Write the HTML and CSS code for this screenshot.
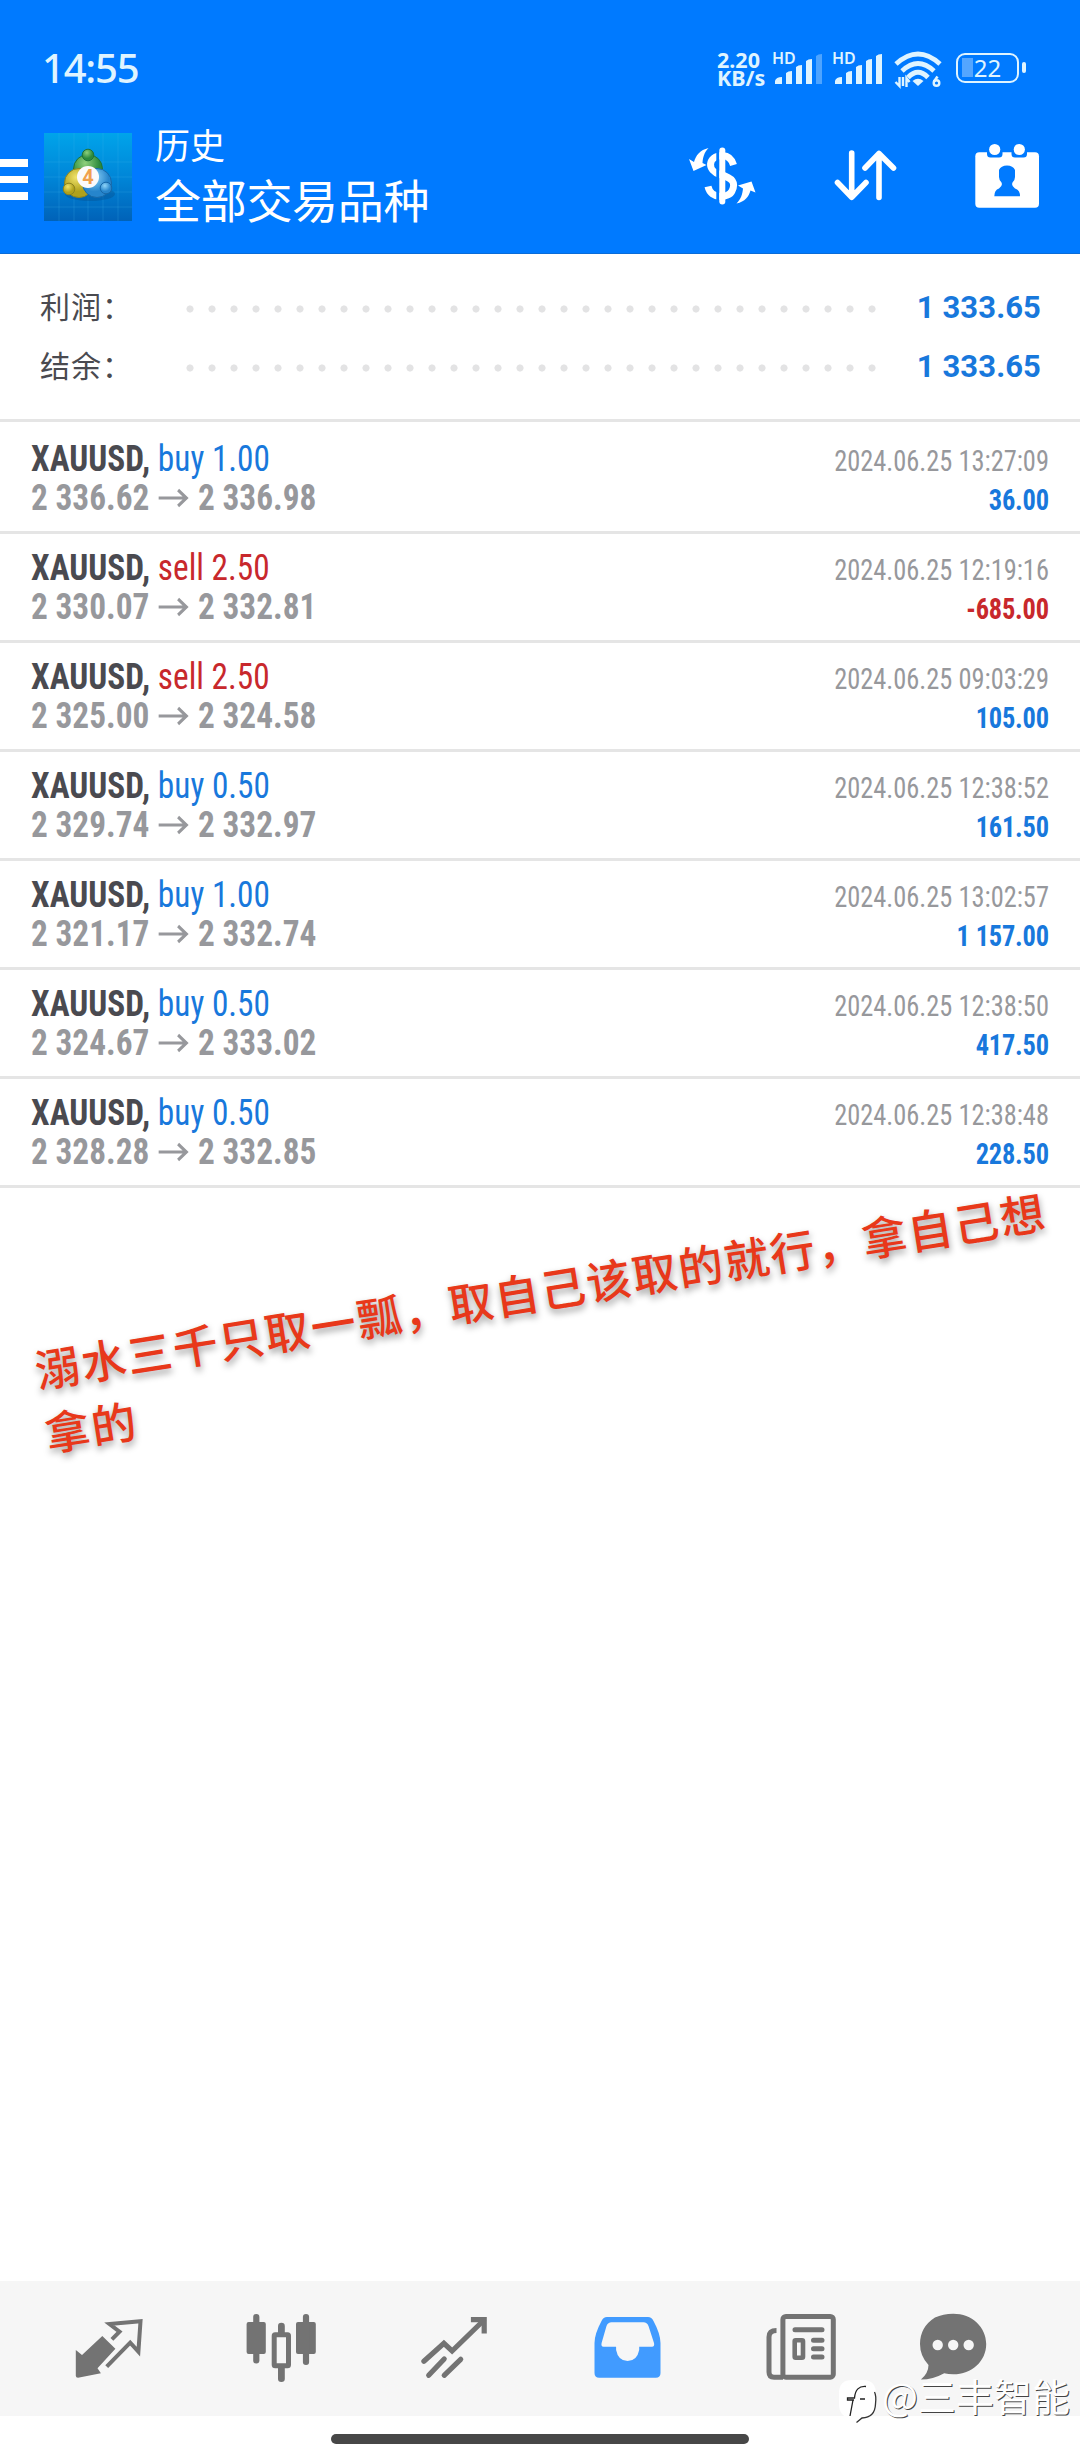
FILE: index.html
```html
<!DOCTYPE html>
<html lang="zh-CN">
<head>
    <meta charset="UTF-8">
    <meta name="viewport" content="width=device-width, initial-scale=1.0">
    <title>历史</title>
    <link rel="stylesheet" href="styles.css">
</head>
<body>
    <div class="screen">
        <header class="header">
            <div class="status-bar">
                <span class="clock">14:55</span>
                <div class="status-icons">
                    <div class="net-speed"><span>2.20</span><span>KB/s</span></div>
                    <div class="signal">
                        <span class="hd">HD</span>
                        <svg width="50" height="32" viewBox="0 0 50 32" fill="#dff4ff">
                            <path d="M1 31v-3q1-4 7-4v7zM12 31V20q2-2 6-2v13zM22 31V14q2-2 6-2v19zM32 31V8q2-2 6-2v25z"/>
                            <path d="M42 31V3q2-2 6-2v30z" opacity=".35"/>
                        </svg>
                    </div>
                    <div class="signal">
                        <span class="hd">HD</span>
                        <svg width="50" height="32" viewBox="0 0 50 32" fill="#dff4ff">
                            <path d="M1 31v-3q1-4 7-4v7zM12 31V20q2-2 6-2v13zM22 31V14q2-2 6-2v19zM32 31V8q2-2 6-2v25zM42 31V3q2-2 6-2v30z"/>
                        </svg>
                    </div>
                    <svg class="wifi" width="48" height="38" viewBox="0 0 48 38" fill="none" stroke="#dff4ff" stroke-width="4.8">
                        <path d="M2 13Q24-7 46 13M8 20Q24 5 40 20M14 26.500Q24 16 34 26.500"/>
                        <path d="M18.500 30Q24 25.500 29.500 30L24 35z" fill="#dff4ff" stroke="none"/>
                        <path d="M5.500 26v9L1.500 31M9 26v9M12.500 36v-9l3 4" stroke-width="2.400"/>
                        <path d="M43.500 25.500L40 30.500" stroke-width="2.600"/>
                        <circle cx="42.500" cy="32" r="2.800" stroke-width="2.400"/>
                    </svg>
                    <div class="battery"><span>22</span></div>
                </div>
            </div>
            <div class="app-bar">
                <div class="menu"><i></i><i></i><i></i></div>
                <svg class="logo" width="88" height="88" viewBox="0 0 88 88">
                    <defs>
                        <linearGradient id="sky" x1="0" y1="0" x2="0" y2="1">
                            <stop offset="0" stop-color="#00a4ea"/>
                            <stop offset=".5" stop-color="#0086d8"/>
                            <stop offset="1" stop-color="#0062b8"/>
                        </linearGradient>
                        <radialGradient id="green" cx=".4" cy=".3">
                            <stop offset="0" stop-color="#8ed07c"/>
                            <stop offset="1" stop-color="#2c8a3c"/>
                        </radialGradient>
                        <radialGradient id="yellow" cx=".4" cy=".3">
                            <stop offset="0" stop-color="#f0e36a"/>
                            <stop offset="1" stop-color="#b0a11c"/>
                        </radialGradient>
                        <radialGradient id="blue" cx=".4" cy=".3">
                            <stop offset="0" stop-color="#8fd4f8"/>
                            <stop offset="1" stop-color="#2685cc"/>
                        </radialGradient>
                    </defs>
                    <rect width="88" height="88" fill="url(#sky)"/>
                    <path d="M15 0V88M30 0V88M44 0V88M59 0V88M74 0V88M0 29H88M0 44H88M0 59H88M0 74H88" stroke="#3fb4ee" stroke-opacity=".22"/>
                    <ellipse cx="46" cy="61" rx="25" ry="7" fill="#064a86" opacity=".35"/>
                    <circle cx="44" cy="36" r="14.500" fill="url(#green)" stroke="#1f7238"/>
                    <circle cx="35" cy="50" r="14.500" fill="url(#yellow)" stroke="#8c8420"/>
                    <circle cx="53" cy="50" r="14.500" fill="url(#blue)" stroke="#1868a8"/>
                    <circle cx="44" cy="22" r="5.800" fill="url(#green)" stroke="#1f7238"/>
                    <circle cx="25" cy="56" r="5.800" fill="url(#yellow)" stroke="#8c8420"/>
                    <circle cx="62" cy="55" r="5.800" fill="url(#blue)" stroke="#1868a8"/>
                    <circle cx="44" cy="44" r="11" fill="#fbfafa"/>
                    <text x="44" y="51" class="logo-num" text-anchor="middle">4</text>
                </svg>
                <div class="titles">
                    <p class="title">历史</p>
                    <p class="subtitle">全部交易品种</p>
                </div>
                <div class="actions">
                    <svg width="76" height="64" viewBox="0 0 76 64">
                        <path d="M48.500 21Q46 12 37.500 11.500C22 12 22 27 35 30.500S51 39 47 47C44 54 26 56 23 42.500" fill="none" stroke="#fff" stroke-width="7"/>
                        <path d="M32.800 4v56" stroke="#007aff" stroke-width="3"/>
                        <path d="M37.300 6.500v51" stroke="#fff" stroke-width="6" stroke-linecap="round"/>
                        <path d="M4 15l5 3C11 11 15 6 23.500 4 19 9 18 13 17.500 19l4 2L8.500 27zM70.500 48.500l-4-11L53 41.500l5 3C57.500 50 56 55 51.500 59.500 60 58 64 52 65.500 46.500z" fill="#fff"/>
                    </svg>
                    <svg width="72" height="60" viewBox="0 0 72 60" fill="none" stroke="#fff" stroke-width="5.600" stroke-linecap="round" stroke-linejoin="round">
                        <path d="M21.700 7v44M7.500 36.500l14.200 14.700L36 36.500"/>
                        <path d="M49 51.500V7.500M35 22L49 7.500 63.500 22"/>
                    </svg>
                    <svg width="74" height="72" viewBox="0 0 74 72">
                        <rect x="5.300" y="12.300" width="63.700" height="55.400" rx="4" fill="#fff"/>
                        <path d="M17 10h15.500v4q0 3.500-3.500 3.500h-8.500q-3.500 0-3.500-3.500zM41.500 10H57v4q0 3.500-3.500 3.500H45q-3.500 0-3.500-3.500z" fill="#007aff"/>
                        <circle cx="24.700" cy="9.500" r="5.600" fill="#fff"/>
                        <circle cx="49.300" cy="9.500" r="5.600" fill="#fff"/>
                        <path d="M29 30Q31 25.500 37 25.500T45 30V37q0 3-2.500 5.500Q41 46 45 48.500 50 50 50 56.300H24.300Q24.300 50 29 48.500 33 46 31.500 42.500 29 40 29 37z" fill="#007aff"/>
                    </svg>
                </div>
            </div>
        </header>

        <section class="summary">
            <div class="summary-row"><span class="label">利润：</span><span class="dots"></span><b>1 333.65</b></div>
            <div class="summary-row"><span class="label">结余：</span><span class="dots"></span><b>1 333.65</b></div>
        </section>

        <main class="deals">
            <div class="deal">
                <div class="left">
                    <p><b>XAUUSD,</b> <span class="buy">buy 1.00</span></p>
                    <p class="price">2 336.62 <svg class="arrow" viewBox="0 0 34 20"><path d="M1 10h30M22 2l9 8-9 8"/></svg> 2 336.98</p>
                </div>
                <div class="right"><p class="date">2024.06.25 13:27:09</p><p class="profit">36.00</p></div>
            </div>
            <div class="deal">
                <div class="left">
                    <p><b>XAUUSD,</b> <span class="sell">sell 2.50</span></p>
                    <p class="price">2 330.07 <svg class="arrow" viewBox="0 0 34 20"><path d="M1 10h30M22 2l9 8-9 8"/></svg> 2 332.81</p>
                </div>
                <div class="right"><p class="date">2024.06.25 12:19:16</p><p class="profit loss">-685.00</p></div>
            </div>
            <div class="deal">
                <div class="left">
                    <p><b>XAUUSD,</b> <span class="sell">sell 2.50</span></p>
                    <p class="price">2 325.00 <svg class="arrow" viewBox="0 0 34 20"><path d="M1 10h30M22 2l9 8-9 8"/></svg> 2 324.58</p>
                </div>
                <div class="right"><p class="date">2024.06.25 09:03:29</p><p class="profit">105.00</p></div>
            </div>
            <div class="deal">
                <div class="left">
                    <p><b>XAUUSD,</b> <span class="buy">buy 0.50</span></p>
                    <p class="price">2 329.74 <svg class="arrow" viewBox="0 0 34 20"><path d="M1 10h30M22 2l9 8-9 8"/></svg> 2 332.97</p>
                </div>
                <div class="right"><p class="date">2024.06.25 12:38:52</p><p class="profit">161.50</p></div>
            </div>
            <div class="deal">
                <div class="left">
                    <p><b>XAUUSD,</b> <span class="buy">buy 1.00</span></p>
                    <p class="price">2 321.17 <svg class="arrow" viewBox="0 0 34 20"><path d="M1 10h30M22 2l9 8-9 8"/></svg> 2 332.74</p>
                </div>
                <div class="right"><p class="date">2024.06.25 13:02:57</p><p class="profit">1 157.00</p></div>
            </div>
            <div class="deal">
                <div class="left">
                    <p><b>XAUUSD,</b> <span class="buy">buy 0.50</span></p>
                    <p class="price">2 324.67 <svg class="arrow" viewBox="0 0 34 20"><path d="M1 10h30M22 2l9 8-9 8"/></svg> 2 333.02</p>
                </div>
                <div class="right"><p class="date">2024.06.25 12:38:50</p><p class="profit">417.50</p></div>
            </div>
            <div class="deal">
                <div class="left">
                    <p><b>XAUUSD,</b> <span class="buy">buy 0.50</span></p>
                    <p class="price">2 328.28 <svg class="arrow" viewBox="0 0 34 20"><path d="M1 10h30M22 2l9 8-9 8"/></svg> 2 332.85</p>
                </div>
                <div class="right"><p class="date">2024.06.25 12:38:48</p><p class="profit">228.50</p></div>
            </div>
            <p class="note">溺水三千只取一瓢，取自己该取的就行，拿自己想<br>拿的</p>
        </main>

        <nav class="tab-bar">
            <svg width="80" height="76" viewBox="0 0 80 76">
                <path d="M5.800 40l6.200 5 20.300-19 13.100 12.700-17.900 19.600 3.400 5L8 67.700q-2.200 0-2.200-2z" fill="#737373"/>
                <path d="M41.900 29.300l7.600-7.600-10-7.700 31-2.700-2.100 30.400-8.200-9-23.500 24" fill="none" stroke="#737373" stroke-width="4"/>
            </svg>
            <svg width="80" height="76" viewBox="0 0 80 76" fill="#737373">
                <rect x="6.600" y="12" width="19.200" height="32" rx="2"/>
                <rect x="13.200" y="4" width="6.200" height="49.500" rx="3"/>
                <rect x="34.200" y="24.800" width="14.300" height="31" rx="1" fill="none" stroke="#737373" stroke-width="5"/>
                <path d="M38 24v-8q0-3.300 3.400-3.300t3.400 3.300v8zM38 57v12q0 3 3.400 3t3.400-3V57z"/>
                <rect x="56" y="12" width="19.800" height="32" rx="2"/>
                <rect x="62.900" y="4" width="6.200" height="51" rx="3"/>
            </svg>
            <svg width="80" height="76" viewBox="0 0 80 76" fill="none" stroke="#737373" stroke-width="5.200" stroke-linecap="round">
                <path d="M8.900 51.300l20-18 8.200 7.700L68.500 10.500"/>
                <path d="M58.500 9.700h10.700V21" stroke-linecap="square"/>
                <path d="M29.200 49L13.700 65.300M45.700 49.300L29.200 65.300"/>
            </svg>
            <svg width="80" height="76" viewBox="0 0 80 76">
                <path d="M4.500 63V33Q4.500 24 11.500 11 13.300 7 17 7H58q3.700 0 5.500 4 7 13 7 22V63q0 4.700-4.700 4.700H9.200q-4.700 0-4.700-4.700z" fill="#419bff"/>
                <path d="M21.500 12.300H53.500q3.500 0 5 3.700L64 33q.8 3.700-2 3.700H49.200V40Q47 51 37.600 51T26.100 40V36.700H13.500Q10.800 36.700 11.600 33L16.500 16q1.500-3.700 5-3.700z" fill="#f6f6f6"/>
            </svg>
            <svg width="80" height="76" viewBox="0 0 80 76" fill="none" stroke="#737373" stroke-width="5" stroke-linecap="round">
                <rect x="22.900" y="6.500" width="50.400" height="60.700" rx="3"/>
                <path d="M16.500 20.500q-7.500 0-7.500 6.500V62q0 5.200 5 5.200h9" stroke-linecap="butt"/>
                <path d="M35 19.700H62M53.500 30.300H62M53.500 38.700H62M53.500 47H62"/>
                <rect x="34.700" y="30.200" width="8.300" height="17.500" rx="1" stroke-width="4.600"/>
            </svg>
            <svg width="80" height="76" viewBox="0 0 80 76">
                <path d="M38.200 3.700C57 3.700 71.200 17 71.200 34S57 64.300 38.200 64.300q-5 0-9-1Q18 69.600 5.900 69.600 13.500 63 13.500 55 5 46 5 34 5 17 20 7.500 28 3.700 38.200 3.700z" fill="#737373"/>
                <g fill="#f6f6f6"><circle cx="22.700" cy="35" r="5.200"/><circle cx="38.200" cy="35" r="5.200"/><circle cx="53.700" cy="35" r="5.200"/></g>
            </svg>
        </nav>
        <div class="home-area"><div class="home-bar"></div></div>

        <div class="watermark">
            <svg width="40" height="46" viewBox="0 0 40 46">
                <path d="M14 1H25Q38 1 38 15V25Q38 39 24 39L18 44 19 39H13Q1 38 1 25V14Q1 1 14 1z" fill="#fff"/>
                <path d="M36.500 13Q38.500 17 37.500 25 37 38.500 24 39L18.500 43.500" fill="none" stroke="#333" stroke-width="1.300"/>
                <path d="M28 7.500Q17.500 6.500 16.500 19H9.500V21H16M12 37l3-16M22 20h5" fill="none" stroke="#222" stroke-width="1.300"/>
            </svg>
            <span>@三丰智能</span>
        </div>
    </div>
</body>
</html>
```
FILE: styles.css
```css
body, html {
    margin: 0;
    padding: 0;
    background-color: #ffffff;
    font-family: Roboto, "Noto Sans CJK SC", sans-serif;
}
p {
    margin: 0;
}
svg {
    display: block;
    flex-shrink: 0;
}
.screen {
    position: relative;
    display: flex;
    flex-direction: column;
    width: 1080px;
    height: 2460px;
    overflow: hidden;
}

/* header */
.header {
    height: 254px;
    box-sizing: border-box;
    background-color: #007aff;
    border-bottom: 1px solid #0a6cd8;
    color: #ffffff;
}
.status-bar {
    display: flex;
    justify-content: space-between;
    height: 114px;
    padding: 0 61px 0 42px;
    color: #dff4ff;
    font-family: "Noto Sans", "Noto Sans CJK SC", sans-serif;
}
.clock {
    margin-top: 40px;
    font-size: 40px;
    line-height: 56px;
    font-weight: 500;
    letter-spacing: -1.2px;
}
.status-icons {
    display: flex;
    align-items: flex-start;
    padding-top: 51px;
}
.net-speed {
    display: flex;
    flex-direction: column;
    width: 55px;
    font-size: 21.5px;
    line-height: 18px;
    font-weight: 700;
}
.signal {
    position: relative;
    width: 60px;
    padding-top: 2px;
}
.signal svg {
    margin-left: 2px;
}
.hd {
    position: absolute;
    left: 0;
    top: -1px;
    font-size: 16px;
    line-height: 16px;
    font-weight: 600;
}
.wifi {
    margin: 0 14px 0 2px;
}
.battery {
    position: relative;
    width: 63px;
    height: 30px;
    box-sizing: border-box;
    margin-top: 2px;
    border: 2.5px solid #dff4ff;
    border-radius: 9px;
    background: linear-gradient(#54a6ff, #54a6ff) 4px 3px / 11px 19px no-repeat;
    font-size: 24px;
    line-height: 25px;
    text-align: center;
}
.battery::after {
    content: "";
    position: absolute;
    right: -9px;
    top: 7px;
    width: 4px;
    height: 11px;
    border-radius: 2px;
    background-color: #dff4ff;
}
.app-bar {
    display: flex;
    align-items: flex-start;
}
.menu {
    display: flex;
    flex-direction: column;
    gap: 9px;
    width: 44px;
    padding-top: 45px;
}
.menu i {
    width: 28px;
    height: 7.5px;
    background-color: #ffffff;
}
.logo {
    margin-top: 19px;
}
.logo-num {
    font-size: 20px;
    font-weight: 700;
    fill: #f0a04c;
}
.titles {
    width: 530px;
    padding: 5px 0 0 23px;
    font-family: "Noto Sans CJK SC", sans-serif;
}
.title {
    font-size: 35px;
    line-height: 49px;
}
.subtitle {
    font-size: 46px;
    line-height: 60px;
    letter-spacing: -0.3px;
}
.actions {
    display: flex;
    align-items: center;
    gap: 68.5px;
    padding-top: 26px;
}

/* totals */
.summary {
    height: 165px;
    box-sizing: border-box;
    padding: 23px 39px 0 40px;
}
.summary-row {
    display: flex;
    align-items: center;
    height: 59px;
    color: #4a4a50;
}
.label {
    width: 146px;
    margin-top: -4px;
    font-family: "Noto Sans CJK SC", sans-serif;
    font-size: 30px;
    letter-spacing: 1px;
}
.dots {
    flex-shrink: 0;
    width: 704px;
    height: 8px;
    margin: 5px 0 0 -7.5px;
    background: radial-gradient(circle, #e3e3e4 3.2px, transparent 3.9px) 0 0 / 22px 8px repeat-x;
}
.summary-row b {
    margin: 2px 0 0 auto;
    color: #1878dc;
    font-size: 31px;
    letter-spacing: 0.1px;
}

/* deals */
.deals {
    flex: 1;
    border-top: 3px solid #e5e5e5;
}
.deal {
    display: flex;
    justify-content: space-between;
    height: 109px;
    box-sizing: border-box;
    padding: 14px 31px 0;
    border-bottom: 3px solid #e5e5e5;
    font-stretch: 75%;
}
.deal:first-child {
    height: 112px;
    padding-top: 17px;
}
.left {
    color: #4a4a50;
    font-size: 36px;
    line-height: 40px;
    white-space: nowrap;
    transform: scaleX(0.925);
    transform-origin: 0 0;
}
.price {
    margin-top: -1px;
    color: #97989c;
    font-weight: 700;
}
.arrow {
    display: inline-block;
    width: 36px;
    height: 20px;
    vertical-align: 2px;
    fill: none;
    stroke: #97989c;
    stroke-width: 3.2;
}
.right {
    padding-top: 3px;
    font-size: 29px;
    line-height: 39px;
    text-align: right;
    transform: scaleX(0.91);
    transform-origin: 100% 0;
}
.date {
    color: #97989c;
}
.buy {
    color: #1878dc;
}
.sell {
    color: #c8282c;
}
.profit {
    color: #1878dc;
    font-weight: 700;
    letter-spacing: -0.2px;
}
.profit.loss {
    color: #c8282c;
}
.note {
    position: absolute;
    left: 30px;
    top: 1338px;
    transform: rotate(-9deg);
    transform-origin: 0 0;
    color: #e8381a;
    font-family: "Noto Sans CJK SC", sans-serif;
    font-size: 45px;
    font-weight: 500;
    letter-spacing: 1.5px;
    line-height: 64px;
    white-space: nowrap;
    text-shadow: 0 4px 7px rgba(0, 0, 0, 0.4);
}

/* bottom tabs */
.tab-bar {
    display: grid;
    grid-template-columns: 170px 175px 175px 170px 155px 80px;
    height: 135px;
    box-sizing: border-box;
    padding: 29px 0 0 70px;
    background-color: #f6f6f6;
}
.home-area {
    display: flex;
    justify-content: center;
    height: 44px;
    box-sizing: border-box;
    padding-top: 18px;
}
.home-bar {
    width: 418px;
    height: 10px;
    border-radius: 5px;
    background-color: #474747;
}
.watermark {
    position: absolute;
    right: 10px;
    bottom: 35px;
    display: flex;
    align-items: flex-start;
    gap: 4px;
    color: #ffffff;
    font-family: "Noto Sans CJK SC", sans-serif;
    font-size: 38px;
    line-height: 32px;
    text-shadow: 1px 1px 0 #444444;
}
```
